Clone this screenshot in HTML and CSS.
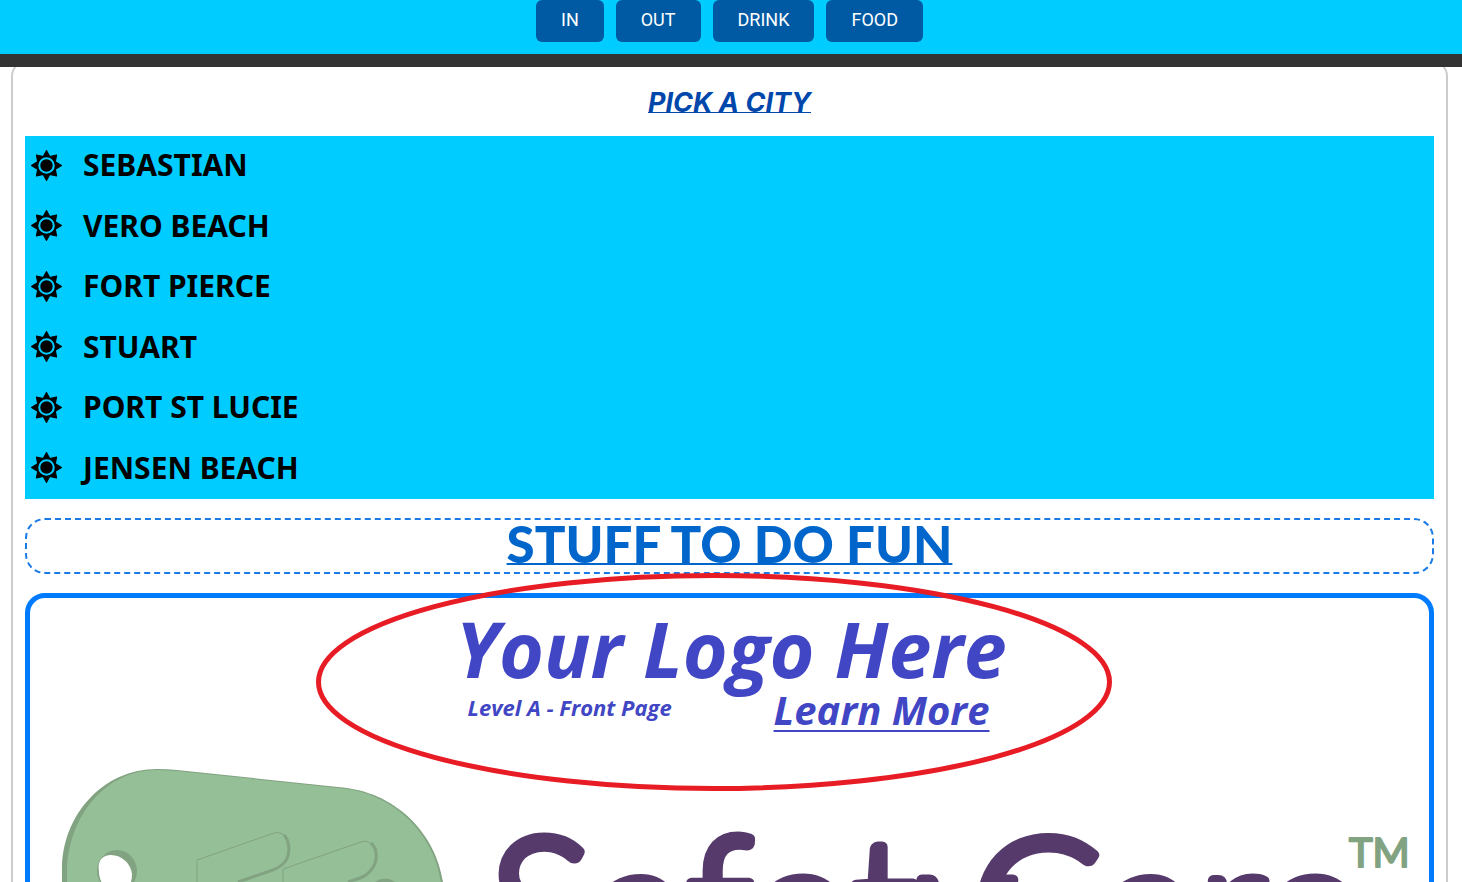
FILE: index.html
```html
<!DOCTYPE html>
<html lang="en">
<head>
<meta charset="utf-8">
<title>Pick a City</title>
<link rel="stylesheet" href="styles.css">
</head>
<body>
<header class="topbar">
  <nav class="nav">
    <a class="nav-link" href="#in">IN</a>
    <a class="nav-link" href="#out">OUT</a>
    <a class="nav-link" href="#drink">DRINK</a>
    <a class="nav-link" href="#food">FOOD</a>
  </nav>
</header>
<svg class="defs" width="0" height="0" aria-hidden="true">
  <symbol id="sun" viewBox="-15 -15 30 30">
    <path d="M0-14.5 3.2-8.6 9.8-10.2 8.6-3.6 14.5 0 8.6 3.6 9.8 10.2 3.2 8.6 0 14.5-3.2 8.6-9.8 10.2-8.6 3.6-14.5 0-8.6-3.6-9.8-10.2-3.2-8.6Z" stroke="#000" stroke-linejoin="round"/>
    <circle r="7" fill="none" stroke="#0cf" stroke-width="2"/>
  </symbol>
</svg>
<main class="page">
  <h2 class="pick">PICK A CITY</h2>
  <ul class="cities">
    <li><a class="city" href="#sebastian"><svg class="sun"><use href="#sun"/></svg>SEBASTIAN</a></li>
    <li><a class="city" href="#vero"><svg class="sun"><use href="#sun"/></svg>VERO BEACH</a></li>
    <li><a class="city" href="#pierce"><svg class="sun"><use href="#sun"/></svg>FORT PIERCE</a></li>
    <li><a class="city" href="#stuart"><svg class="sun"><use href="#sun"/></svg>STUART</a></li>
    <li><a class="city" href="#lucie"><svg class="sun"><use href="#sun"/></svg>PORT ST LUCIE</a></li>
    <li><a class="city" href="#jensen"><svg class="sun"><use href="#sun"/></svg>JENSEN BEACH</a></li>
  </ul>
  <h1 class="stuff">STUFF TO DO FUN</h1>
  <section class="card">
    <svg class="ring" viewBox="0 0 796 218" aria-hidden="true"><ellipse cx="398" cy="109" rx="395.5" ry="106.5"/></svg>
    <div class="promo">
      <p class="promo-title">Your Logo Here</p>
      <div class="promo-row">
        <span class="level">Level A - Front Page</span>
        <a class="learn" href="#learn">Learn More</a>
      </div>
    </div>
    <svg class="brand" viewBox="30 760 1399 330" role="img" aria-label="SafetyCare">
      <path class="tag-edge" d="M62 870C62 815 103 769 157 769Q167 769 177 770L338 787C396 791 436 834 443 882V1090H62Z"/>
      <path class="tag-face" d="M67 870C69 815 106 770 157 770L177 771 338 788C394 792 434 834 441 882V1090H67Z"/>
      <ellipse class="hole-edge" cx="117" cy="871" rx="20" ry="21"/>
      <path class="hole" d="M99 872C97 860 103 855 111 855C122 855 131 864 132 874C132 887 125 895 115 895C106 892 99 881 99 872Z"/>
      <g class="hand">
        <path d="M197 920V860L274 833C282 831 289 837 289 847C289 857 284 866 275 869L238 882"/>
        <path d="M283 920V869L361 842C369 839 376 846 376 855C376 868 369 875 362 878L350 882"/>
        <path class="thick" d="M284 835C290 841 291 855 284 863Q279 868 273 870L238 882"/>
        <path class="thick" d="M371 843C378 849 378 862 371 870Q366 876 360 878L348 882"/>
        <ellipse class="tip" cx="385" cy="891" rx="14" ry="12"/>
      </g>
      <text class="word" x="489" y="978">Safety</text>
      <text class="word" x="970" y="978">Care</text>
      <text class="tm" x="1349" y="867">TM</text>
    </svg>
  </section>
</main>
</body>
</html>
```
FILE: styles.css
```css
* { box-sizing: border-box; }
body {
  margin: 0;
  height: 100vh;
  overflow: hidden;
  background: #fff;
  font-family: "Open Sans", sans-serif;
}
.topbar {
  position: relative;
  z-index: 1;
  background: #0cf;
  border-bottom: 13px solid #333;
  padding-bottom: 12px;
}
.nav {
  display: flex;
  justify-content: center;
  gap: 12px;
  padding-right: 3px;
}
.nav-link {
  padding: 8px 25px 10px;
  border-radius: 6px;
  background: #005aa3;
  color: #fff;
  font: 400 18px/24px Roboto, sans-serif;
  text-decoration: none;
}
.defs { position: absolute; }
.page {
  margin: -6px 14px 0 11px;
  padding: 20px 12px 0;
  border: 2px solid #ccc;
  border-radius: 15px;
}
.pick {
  margin: 0 0 13px;
  color: #0047ab;
  font: italic 700 27px/40px Inter, sans-serif;
  text-align: center;
  text-decoration: underline 1px;
  text-underline-offset: 0;
  text-decoration-skip-ink: none;
}
.cities {
  display: grid;
  grid-auto-rows: 1fr;
  min-height: 363px;
  margin: 0 0 19px;
  padding: 0 6px;
  background: #0cf;
  list-style: none;
}
.city {
  display: flex;
  align-items: center;
  gap: 21px;
  color: #000;
  font: 700 30px/58px "Noto Sans", sans-serif;
  text-decoration: none;
}
.sun { width: 31px; height: 31px; }
.stuff {
  margin: 0 0 19px;
  padding-bottom: 4px;
  border: 2px dashed #1a7ae6;
  border-radius: 20px;
  color: #06c;
  font: 900 51px/48px Lato, sans-serif;
  text-align: center;
  text-decoration: underline 2px;
  text-underline-offset: 0;
  text-decoration-skip-ink: none;
}
.card {
  position: relative;
  border: 5px solid #007bff;
  border-radius: 20px;
}
.ring {
  position: absolute;
  left: calc(50% - 414px);
  top: -25px;
  width: 796px;
  height: 218px;
  fill: none;
  stroke: #e81c24;
  stroke-width: 5;
  pointer-events: none;
}
.promo {
  width: 548px;
  height: 162px;
  margin: 0 auto;
  color: #4146c4;
  font-style: italic;
  font-weight: 700;
}
.promo-title {
  margin: 0;
  font-size: 77px;
  line-height: 102px;
  white-space: nowrap;
}
.promo-row {
  display: flex;
  justify-content: space-between;
  padding: 0 14px 0 12px;
  margin-top: -11px;
}
.level { font-size: 22px; line-height: 36px; }
.learn {
  color: inherit;
  font-size: 40px;
  line-height: 42px;
  text-decoration-thickness: 2px;
  text-underline-offset: 5px;
}
.brand { display: block; width: 100%; }
.tag-edge, .hole-edge, .tip { fill: #82a382; }
.tag-face { fill: #95bf96; }
.hole { fill: #fff; }
.hand { fill: none; stroke: #82a382; stroke-width: 1; }
.thick { stroke-width: 3; }
.word {
  fill: #553a6b;
  stroke: #553a6b;
  stroke-width: 11;
  stroke-linejoin: round;
  font: 300 196px Lato, sans-serif;
}
.tm {
  fill: #82a382;
  stroke: #82a382;
  stroke-width: 2;
  stroke-linejoin: round;
  font: 400 40px Lato, sans-serif;
}
```
